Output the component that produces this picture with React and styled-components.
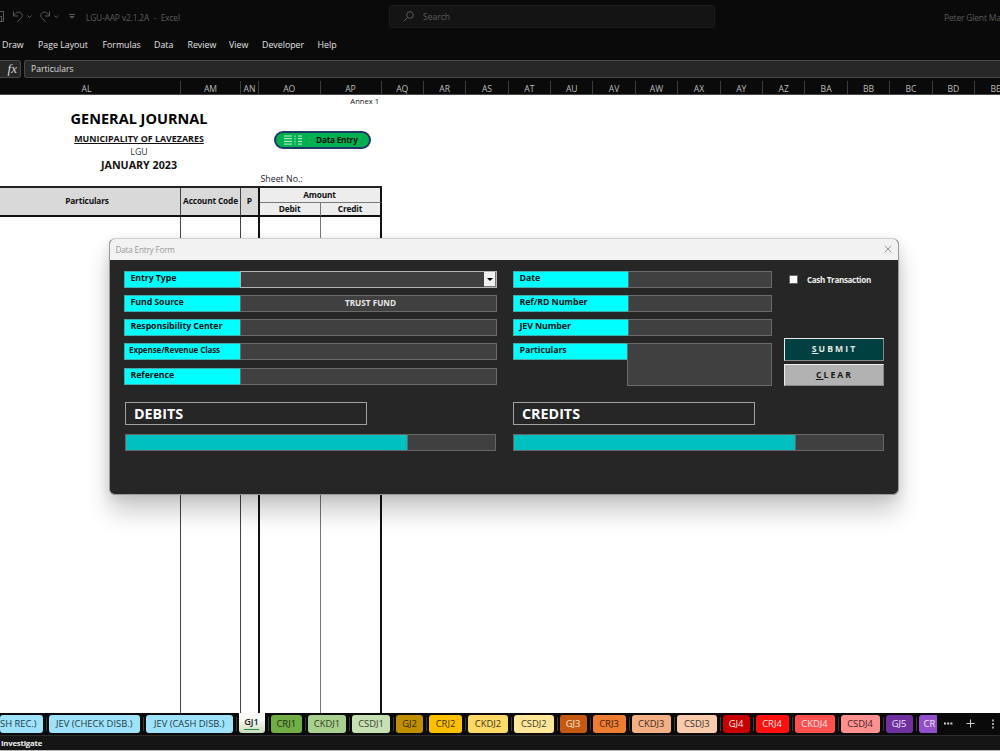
import React from "react";
import styled, { createGlobalStyle } from "styled-components";

const GlobalStyle = createGlobalStyle`
  * {
    box-sizing: border-box;
  }
  body {
    margin: 0;
    overflow: hidden;
    font-family: "Open Sans", "Noto Sans", sans-serif;
    font-size: 9px;
    background: #0a0a0a;
  }
`;

const Window = styled.div`
  position: relative;
  display: flex;
  flex-direction: column;
  width: 1000px;
  height: 751px;
  overflow: hidden;
  white-space: nowrap;
  background: #0a0a0a;

  > * {
    flex: none;
  }
`;

const TitleBar = styled.div`
  display: flex;
  align-items: center;
  height: 33px;
  color: #5c5c5c;
  font-size: 8.5px;

  > * {
    flex: none;
  }
`;

const QuickAccess = styled.svg`
  width: 86px;
  height: 33px;
  fill: none;
  stroke: #5a5a5a;
`;

const FileName = styled.div`
  width: 303px;
  padding-top: 1px;
  font-size: 8.4px;
  letter-spacing: -0.17px;
  word-spacing: 0.3px;
`;

const SearchBox = styled.div`
  display: flex;
  align-items: center;
  width: 326px;
  height: 23px;
  padding-left: 13px;
  gap: 9px;
  border: 1px solid #1c1c1c;
  border-radius: 3px;
  background: #141414;
`;

const SearchIcon = styled.svg`
  width: 11px;
  height: 11px;
  fill: none;
  stroke: #5a5a5a;
`;

const UserName = styled.div`
  margin-left: 229px;
  padding-top: 1px;
  letter-spacing: -0.18px;
`;

const Menu = styled.div`
  display: flex;
  align-items: center;
  height: 26px;
  padding: 0 0 3px 2px;
  color: #e4e4e4;
`;

const MenuItem = styled.div`
  width: ${(p) => p.$w}px;
  font-size: 8.8px;
`;

const FormulaRow = styled.div`
  display: flex;
  gap: 3px;
  height: 19px;
  padding-top: 1px;
`;

const FxBox = styled.div`
  width: 21px;
  height: 18px;
  padding-right: 3px;
  border: 1px solid #484848;
  border-left: 0;
  border-radius: 0 3px 3px 0;
  background: #272727;
  color: #d8d8d8;
  font: italic 13px/15px "Liberation Serif", serif;
  text-align: right;
`;

const FormulaInput = styled.div`
  flex: 1;
  height: 18px;
  padding-left: 6px;
  border: 1px solid #484848;
  border-right: 0;
  border-radius: 3px 0 0 3px;
  background: #272727;
  color: #dcdcdc;
  font-size: 8.6px;
  line-height: 16px;
`;

const ColumnHeaders = styled.div`
  display: flex;
  align-items: flex-end;
  height: 17px;
  border-bottom: 1px solid #4a4a4a;
`;

const ColumnHeader = styled.div`
  flex: none;
  width: ${(p) => p.$w}px;
  height: 13px;
  border-right: 1px solid #3c3c3c;
  color: #bdbdbd;
  font-size: 8.6px;
  line-height: 16px;
  text-align: center;
  text-indent: ${(p) => p.$shift || 0}px;
`;

const Sheet = styled.div`
  display: flex;
  flex-direction: column;
  height: 618px;
  background: #fff;
  color: #111;
`;

const SheetTop = styled.div`
  display: flex;
  height: 91px;
`;

const Titles = styled.div`
  display: flex;
  flex-direction: column;
  align-items: center;
  width: 260px;
  padding: 14px 0 0 18px;
`;

const Heading = styled.div`
  height: 22px;
  font-size: 14.5px;
  font-weight: 700;
  line-height: 20px;
  color: #000;
`;

const Municipality = styled.div`
  height: 14px;
  font-size: 8.9px;
  font-weight: 700;
  line-height: 15px;
  text-decoration: underline;
`;

const Lgu = styled.div`
  height: 12px;
  font-size: 8.8px;
  line-height: 14px;
  color: #333;
`;

const Period = styled.div`
  font-size: 10.7px;
  font-weight: 700;
  line-height: 16px;
`;

const TopSide = styled.div`
  display: flex;
  flex-direction: column;
  width: 121px;
`;

const Annex = styled.div`
  padding-right: 2px;
  font-size: 7.6px;
  line-height: 13px;
  text-align: right;
`;

const DataEntryButton = styled.div`
  display: flex;
  align-items: center;
  gap: 13px;
  width: 96.5px;
  height: 20px;
  margin: 23px 0 23px 14px;
  padding-left: 8px;
  border: 2px solid #1f3864;
  border-radius: 10px;
  background: #00b050;
  font-size: 8.3px;
  font-weight: 700;
  letter-spacing: -0.25px;
  line-height: 14px;
`;

const ListIcon = styled.svg`
  width: 19px;
  height: 10px;
  fill: none;
  stroke: #c6f0d5;
`;

const SheetNo = styled.div`
  padding-left: 0.5px;
  font-size: 8.8px;
  line-height: 15px;
  color: #222;
`;

const Journal = styled.div`
  display: grid;
  grid-template-columns: 181px 60px 18.5px 61px 61px;
  grid-template-rows: 15px 14px 1fr;
  flex: 1;
  width: 381.5px;
  border-top: 2px solid #222;
`;

const HeadCell = styled.div`
  display: flex;
  align-items: center;
  justify-content: center;
  grid-row: ${(p) => p.$row || "1 / 3"};
  grid-column: ${(p) => p.$col};
  padding-right: ${(p) => p.$pad || 0}px;
  border-right: ${(p) => p.$line || "1px solid #444"};
  border-bottom: ${(p) => p.$under || "2px solid #111"};
  background: ${(p) => p.$bg || "#d9d9d9"};
  font-size: 8.3px;
  font-weight: 700;
  letter-spacing: -0.15px;
  line-height: 10px;
  padding-bottom: 1px;
`;

const BodyCell = styled.div`
  grid-row: 3;
  border-right: ${(p) => p.$line};
`;

const TabBar = styled.div`
  display: flex;
  height: 22.5px;
  border-bottom: 1px solid #2c2c2c;
  background: #0a0a0a;
`;

const TabSlot = styled.div`
  position: relative;
  flex: none;
  width: ${(p) => p.$w}px;
  padding: ${(p) => (p.$active ? "0" : "2px 0 0")};
  margin-right: 6px;

  &::after {
    content: "";
    position: absolute;
    top: 4px;
    right: -4px;
    width: 1px;
    height: 14px;
    background: ${(p) => (p.$last ? "transparent" : "#3b3b3b")};
  }
`;

const Tab = styled.div`
  height: ${(p) => (p.$active ? 20 : 17.5)}px;
  padding-right: ${(p) => (p.$align === "right" ? 7 : 0)}px;
  border-radius: ${(p) => (p.$active ? "0 0 3px 3px" : p.$align === "left" ? "3px 0 0 3px" : "3px")};
  background: ${(p) => p.$bg};
  color: ${(p) => p.$fg};
  font-size: ${(p) => (p.$active ? 9.2 : 9.4)}px;
  font-weight: ${(p) => (p.$active ? 600 : 400)};
  line-height: ${(p) => (p.$active ? 18 : 17)}px;
  text-align: ${(p) => p.$align || "center"};
  text-indent: ${(p) => (p.$align === "left" ? 5 : 0)}px;
`;

const ActiveLine = styled.div`
  width: 15px;
  height: 1px;
  margin: -2px auto 0;
  background: #2b8a50;
`;

const TabTools = styled.svg`
  flex: none;
  width: 62px;
  height: 21px;
  fill: none;
  stroke: #d0d0d0;
`;

const StatusBar = styled.div`
  height: 15px;
  padding-left: 1px;
  border-bottom: 1px solid #b8b8b8;
  background: #151515;
  color: #eee;
  font-size: 7.8px;
  font-weight: 700;
  letter-spacing: -0.22px;
  line-height: 15px;
`;

/* floats over the sheet */
const Dialog = styled.div`
  position: absolute;
  top: 238px;
  left: 109px;
  width: 790px;
  height: 257px;
  border: 1px solid #9a9a9a;
  border-top-color: #d0d0d0;
  border-radius: 6px;
  overflow: hidden;
  background: #262626;
  box-shadow: 0 17px 24px rgba(0, 0, 0, 0.2), 0 2px 12px rgba(0, 0, 0, 0.1);
`;

const DialogTitle = styled.div`
  display: flex;
  align-items: center;
  justify-content: space-between;
  height: 21px;
  padding: 0 6px 0 5.5px;
  background: #f2f2f2;
  color: #999;
  font-size: 8.2px;
  letter-spacing: -0.2px;
`;

const CloseIcon = styled.svg`
  width: 8px;
  height: 8px;
  margin-bottom: 1px;
  stroke: #999;
`;

const DialogBody = styled.div`
  display: flex;
  flex-direction: column;
  padding: 11px 14px 0 14px;
`;

const Columns = styled.div`
  display: flex;
  height: 131px;
`;

const FieldColumn = styled.div`
  display: flex;
  flex-direction: column;
  gap: 7px;
  width: ${(p) => p.$w}px;
  margin-right: ${(p) => p.$gap}px;
`;

const Field = styled.div`
  display: flex;
  align-items: flex-start;
  height: 17px;
  margin-top: ${(p) => p.$drop || 0}px;
`;

const Label = styled.div`
  width: ${(p) => p.$w}px;
  height: 17px;
  padding-left: ${(p) => (p.$small ? 4 : 5.5)}px;
  border: 1px solid #4aa;
  border-right: 0;
  background: #00ffff;
  color: #001414;
  font-size: ${(p) => (p.$small ? 8 : 8.8)}px;
  font-weight: 700;
  letter-spacing: ${(p) => (p.$small ? -0.1 : -0.08)}px;
  line-height: ${(p) => (p.$small ? 12 : 13)}px;
`;

const Input = styled.div`
  display: flex;
  flex: 1;
  justify-content: ${(p) => (p.$combo ? "flex-end" : "center")};
  height: ${(p) => p.$h || 17}px;
  padding-left: ${(p) => (p.$combo ? 0 : 4)}px;
  border: 1px solid ${(p) => (p.$combo ? "#b4b4b4" : "#6b6b6b")};
  background: #404040;
  color: #e8e8e8;
  font-size: 8.2px;
  font-weight: 700;
  line-height: 14px;
`;

const Arrow = styled.div`
  display: flex;
  align-items: center;
  justify-content: center;
  width: 12px;
  height: 15px;
  border-right: 1px solid #777;
  border-bottom: 1px solid #777;
  background: #f0f0f0;

  &::after {
    content: "";
    border: 3px solid transparent;
    border-top-color: #000;
    border-bottom: 0;
  }
`;

const Actions = styled.div`
  display: flex;
  flex-direction: column;
  width: 100px;
`;

const CheckRow = styled.div`
  display: flex;
  align-items: center;
  gap: 9px;
  height: 16px;
  margin-bottom: 51px;
  padding-left: 5px;
  color: #eee;
  font-size: 8.1px;
  font-weight: 700;
  letter-spacing: -0.35px;
`;

const CheckBox = styled.div`
  width: 9px;
  height: 9px;
  border: 1px solid #666;
  background: #fff;
`;

const ActionButton = styled.div`
  height: 22.5px;
  margin-bottom: 3px;
  border: 1px solid;
  border-color: #eee #888 #888 #eee;
  background: ${(p) => p.$bg};
  color: ${(p) => p.$fg};
  font-size: 8.6px;
  font-weight: 700;
  letter-spacing: 2.1px;
  line-height: 20px;
  text-align: center;
  text-indent: 1px;
`;

const Totals = styled.div`
  display: flex;
  gap: 17px;
  padding-left: 1px;
`;

const TotalsColumn = styled.div`
  width: 371px;
`;

const TotalsTitle = styled.div`
  width: 242px;
  height: 23px;
  margin-bottom: 9px;
  padding-left: 8px;
  border: 1px solid #a0a0a0;
  color: #fff;
  font-size: 14.3px;
  font-weight: 700;
  line-height: 22px;
`;

const Bar = styled.div`
  width: 371px;
  height: 17px;
  border: 1px solid #666;
  background: #404040;
`;

const BarFill = styled.div`
  width: 282px;
  height: 15px;
  border-right: 1px solid #667;
  background: #00c0c0;
`;

const menu = [
  ["Draw", 36],
  ["Page Layout", 64.5],
  ["Formulas", 51.5],
  ["Data", 33.5],
  ["Review", 41.5],
  ["View", 33],
  ["Developer", 55.5],
  ["Help", 30],
];

const columns = [
  ["AL", 181, -7],
  ["AM", 60],
  ["AN", 18],
  ["AO", 61.5],
  ["AP", 61],
  ...["AQ", "AR", "AS", "AT", "AU", "AV", "AW", "AX", "AY", "AZ", "BA", "BB", "BC", "BD", "BE"].map(
    (name) => [name, 42.4]
  ),
];

const tabs = [
  ["SH REC.)", 42.5, "#9fe3fb", "#1d3a45"],
  ["JEV (CHECK DISB.)", 91.5, "#9fe3fb", "#1d3a45"],
  ["JEV (CASH DISB.)", 86.5, "#9fe3fb", "#1d3a45"],
  ["GJ1", 26, "linear-gradient(#fff, #f4f7f1 40%, #c8dcba)", "#222", true],
  ["CRJ1", 31.5, "#70ad47", "#1c3010"],
  ["CKDJ1", 38, "#a9d08e", "#2c3f22"],
  ["CSDJ1", 38, "#c6e0b4", "#35422d"],
  ["GJ2", 27, "#bf8f00", "#302400"],
  ["CRJ2", 33, "#ffc000", "#403000"],
  ["CKDJ2", 40, "#ffd966", "#403617"],
  ["CSDJ2", 39.5, "#ffe699", "#403a26"],
  ["GJ3", 27, "#c65911", "#fbe8dc"],
  ["CRJ3", 33, "#ed7d31", "#3d200c"],
  ["CKDJ3", 39.5, "#f4b084", "#3d2c21"],
  ["CSDJ3", 39.5, "#f8cbad", "#3e332b"],
  ["GJ4", 27, "#c80000", "#ffe8e8"],
  ["CRJ4", 33, "#ff0f0f", "#ffe8e8"],
  ["CKDJ4", 40, "#ff5050", "#ffe8e8"],
  ["CSDJ4", 39, "#ff9090", "#402424"],
  ["GJ5", 27, "#7030a0", "#f0e6f7"],
];

const inner = "1px solid #444";
const heavy = "2px solid #111";
const soft = "1px solid #777";

const LabeledField = ({ label, labelWidth = 116, small, drop, height, combo, children }) => (
  <Field $drop={drop}>
    <Label $w={labelWidth} $small={small}>
      {label}
    </Label>
    <Input $h={height} $combo={combo}>
      {children}
    </Input>
  </Field>
);

const EntryDialog = () => (
  <Dialog>
    <DialogTitle>
      Data Entry Form
      <CloseIcon viewBox="0 0 8 8">
        <path d="M.7.7 7.3 7.3M7.3.7.7 7.3" />
      </CloseIcon>
    </DialogTitle>
    <DialogBody>
      <Columns>
        <FieldColumn $w={373} $gap={16}>
          <LabeledField label="Entry Type" combo>
            <Arrow />
          </LabeledField>
          <LabeledField label="Fund Source">TRUST FUND</LabeledField>
          <LabeledField label="Responsibility Center" />
          <LabeledField label="Expense/Revenue Class" small />
          <LabeledField label="Reference" drop={1} />
        </FieldColumn>
        <FieldColumn $w={259} $gap={12}>
          <LabeledField label="Date" labelWidth={115} />
          <LabeledField label="Ref/RD Number" labelWidth={115} />
          <LabeledField label="JEV Number" labelWidth={115} />
          <LabeledField label="Particulars" labelWidth={114} height={43} />
        </FieldColumn>
        <Actions>
          <CheckRow>
            <CheckBox />
            Cash Transaction
          </CheckRow>
          <ActionButton $bg="#004040" $fg="#e6e6e6">
            <u>S</u>UBMIT
          </ActionButton>
          <ActionButton $bg="#b2b2b2" $fg="#1a1a1a">
            <u>C</u>LEAR
          </ActionButton>
        </Actions>
      </Columns>
      <Totals>
        <TotalsColumn>
          <TotalsTitle>DEBITS</TotalsTitle>
          <Bar>
            <BarFill />
          </Bar>
        </TotalsColumn>
        <TotalsColumn>
          <TotalsTitle>CREDITS</TotalsTitle>
          <Bar>
            <BarFill />
          </Bar>
        </TotalsColumn>
      </Totals>
    </DialogBody>
  </Dialog>
);

const App = () => (
  <>
    <GlobalStyle />
    <Window>
      <TitleBar>
        <QuickAccess viewBox="0 0 86 33">
          <path d="M0 11.5h3.5v10H0M0 16.5h1.5v5" />
          <path d="M13.5 11.5v4.5h4.5M13.8 15.7c2-3.6 5.2-4.5 7.3-2.7 2 1.8 1.3 4-.3 5.5l-3.5 3.3" />
          <path d="M27.5 15.5l2 2 2-2M54.5 15.5l2 2 2-2" />
          <path d="M49.5 11.5v4.5H45M49.2 15.7c-2-3.6-5.2-4.5-7.3-2.7-2 1.8-1.3 4 .3 5.5l3.5 3.3" />
          <path d="M69 14.5h6M70 16.5l2 2 2-2z" />
        </QuickAccess>
        <FileName>LGU-AAP v2.1.2A &nbsp;-&nbsp; Excel</FileName>
        <SearchBox>
          <SearchIcon viewBox="0 0 11 11">
            <circle cx="7" cy="4" r="3.3" />
            <path d="M4.6 6.4.6 10.4" />
          </SearchIcon>
          Search
        </SearchBox>
        <UserName>Peter Glent Mar</UserName>
      </TitleBar>
      <Menu>
        {menu.map(([name, w]) => (
          <MenuItem key={name} $w={w}>
            {name}
          </MenuItem>
        ))}
      </Menu>
      <FormulaRow>
        <FxBox>fx</FxBox>
        <FormulaInput>Particulars</FormulaInput>
      </FormulaRow>
      <ColumnHeaders>
        {columns.map(([name, w, shift]) => (
          <ColumnHeader key={name} $w={w} $shift={shift}>
            {name}
          </ColumnHeader>
        ))}
      </ColumnHeaders>
      <Sheet>
        <SheetTop>
          <Titles>
            <Heading>GENERAL JOURNAL</Heading>
            <Municipality>MUNICIPALITY OF LAVEZARES</Municipality>
            <Lgu>LGU</Lgu>
            <Period>JANUARY 2023</Period>
          </Titles>
          <TopSide>
            <Annex>Annex 1</Annex>
            <DataEntryButton>
              <ListIcon viewBox="0 0 19 10">
                <path d="M0 1h8M0 3.7h8M0 6.4h8M0 9.1h8M14 1h4M14 3.7h4M14 6.4h4M14 9.1h4" />
                <path d="M11 .5v9" strokeDasharray="1.5 1.2" />
              </ListIcon>
              Data Entry
            </DataEntryButton>
            <SheetNo>Sheet No.:</SheetNo>
          </TopSide>
        </SheetTop>
        <Journal>
          <HeadCell $col="1" $pad={6}>
            Particulars
          </HeadCell>
          <HeadCell $col="2">Account Code</HeadCell>
          <HeadCell $col="3" $line={heavy}>
            P
          </HeadCell>
          <HeadCell $col="4 / 6" $row="1" $line={heavy} $under={soft} $bg="#ededed">
            Amount
          </HeadCell>
          <HeadCell $col="4" $row="2" $line={soft} $bg="#ededed">
            Debit
          </HeadCell>
          <HeadCell $col="5" $row="2" $line={heavy} $bg="#ededed">
            Credit
          </HeadCell>
          <BodyCell $line={inner} />
          <BodyCell $line={inner} />
          <BodyCell $line={heavy} />
          <BodyCell $line={soft} />
          <BodyCell $line={heavy} />
        </Journal>
      </Sheet>
      <TabBar>
        {tabs.map(([name, w, bg, fg, active], i) => (
          <TabSlot key={name} $w={w} $active={active}>
            <Tab $bg={bg} $fg={fg} $active={active} $align={i === 0 ? "right" : "center"}>
              {name}
              {active && <ActiveLine />}
            </Tab>
          </TabSlot>
        ))}
        <TabSlot $w={18.5} $last>
          <Tab $bg="#954eca" $fg="#f0e6f7" $align="left">
            CR
          </Tab>
        </TabSlot>
        <TabTools viewBox="0 0 62 21">
          <path d="M1 10.5h2M4.2 10.5h2M7.4 10.5h2" strokeWidth="2" />
          <path d="M23.5 10.5h8M27.5 6.5v8" />
          <path d="M50 6.5v2M50 10v2M50 13.5v2" strokeWidth="1.5" />
        </TabTools>
      </TabBar>
      <StatusBar>Investigate</StatusBar>
      <EntryDialog />
    </Window>
  </>
);

export default App;
